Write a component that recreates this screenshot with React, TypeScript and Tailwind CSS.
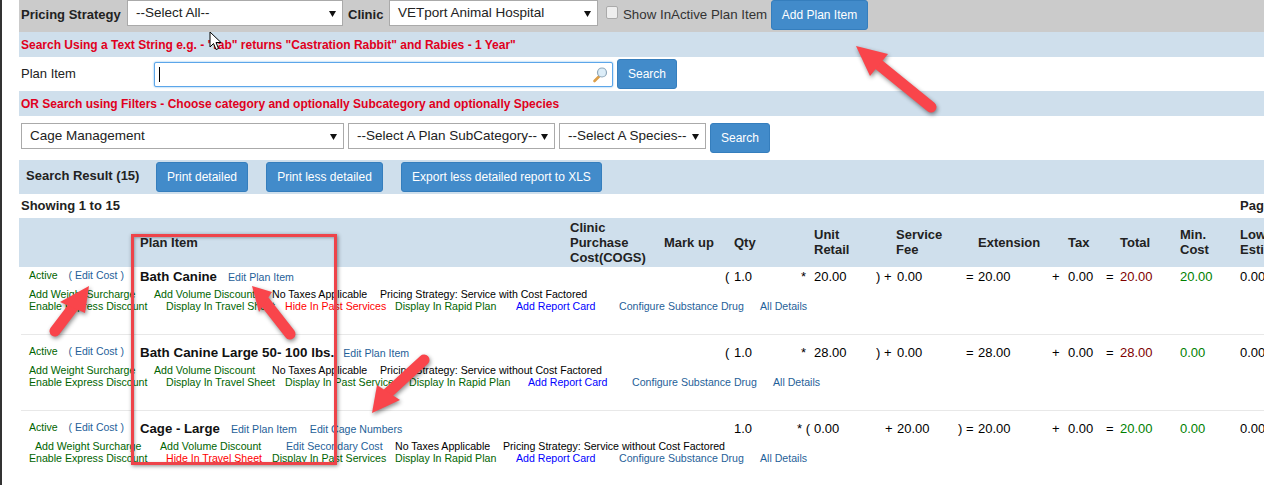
import React from "react";

const G = "text-[#006400]";
const B = "text-[#1f5f99]";
const K = "text-black";
const U = "text-[#0000ff]";
const R = "text-[#ff0000]";
const gridCols = "grid grid-cols-[121px_430px_94px_61px_72px_79px_82px_94px_54px_74px_60px_1fr]";

type Item = [string, string, string];

function Sel({ label, w, h = "h-[26px]" }: { label: string; w: string; h?: string }) {
  return (
    <div className={`relative shrink-0 ${w} ${h} border border-[#aaa] bg-white flex items-center pl-[8px] pt-[1px] text-[13.5px] text-[#222] whitespace-nowrap`}>
      {label}
      <svg className="absolute right-[6px] top-[9px]" width="7" height="7" viewBox="0 0 7 7"><path d="M0 1h7L3.5 7z" fill="#111" /></svg>
    </div>
  );
}

function Btn({ label, w, h = "h-[30px]" }: { label: string; w: string; h?: string }) {
  return (
    <button className={`shrink-0 ${w} ${h} rounded-[3px] bg-[#428bca] border border-[#357ebd] text-white text-[12px] flex items-center justify-center`}>
      {label}
    </button>
  );
}

function Line({ items, cls }: { items: Item[]; cls: string }) {
  return (
    <div className={`flex h-[12px] items-center pl-[10px] text-[10.6px] leading-[12px] whitespace-nowrap ${cls}`}>
      {items.map(([t, w, c]) => (
        <span key={t} className={`shrink-0 ${w} ${c}`}>{t}</span>
      ))}
    </div>
  );
}

function Cell({ p, pw, v, vc = "text-black" }: { p: string; pw: string; v: string; vc?: string }) {
  return (
    <div className="flex whitespace-nowrap">
      <span className={`shrink-0 ${pw} text-left`}>{p}</span>
      <span className={vc}>{v}</span>
    </div>
  );
}

function Row({ top, name, nameSize, links, vals, l1, l2, l1cls, border, h }: {
  top: string; name: string; nameSize: string; links: React.ReactNode; vals: React.ReactNode; l1: Item[]; l2: Item[]; l1cls: string; border: boolean; h: string;
}) {
  return (
    <div className={`${h} ${top} ${border ? "border-t border-[#e8e8e8] ml-[2px]" : ""}`}>
      <div className={`${gridCols} ${border ? "-ml-[2px]" : ""} text-[13px] leading-[16px] text-black h-[19px] items-center`}>
        <div className="pl-[10px] pb-[3px] text-[10.5px] text-[#006400] whitespace-nowrap">
          Active <span className="ml-[8px] text-[#1f5f99]">( Edit Cost )</span>
        </div>
        <div className="flex items-baseline whitespace-nowrap">
          <span className={`${nameSize} font-bold text-[#111]`}>{name}</span>
          {links}
        </div>
        <div />
        <div />
        {vals}
      </div>
      <div className={`mt-[2px] ${border ? "-ml-[2px]" : ""}`}>
        <Line items={l1} cls={l1cls} />
        <Line items={l2} cls="" />
      </div>
    </div>
  );
}

function Arrow({ tail, neck, head }: { tail: [number, number]; neck: [number, number]; head: string }) {
  return (
    <g>
      <line x1={tail[0]} y1={tail[1]} x2={neck[0]} y2={neck[1]} stroke="#f9454b" strokeWidth="11" strokeLinecap="round" />
      <polygon points={head} fill="#f9454b" />
    </g>
  );
}

export default function App() {
  const hd = "text-[13px] leading-[15px] font-bold text-[#222]";
  return (
    <div className="relative h-[485px] w-[1264px] overflow-hidden bg-white flex font-['Liberation_Sans',Arial,sans-serif]">
      <div className="w-[2px] bg-[#333] shrink-0" />
      <div className="flex-1 ml-[17px] min-w-0 flex flex-col">
        <div className="h-[32px] shrink-0 bg-[#cbcbcb] flex items-start pl-[2px] text-[#222]">
          <span className="text-[13px] font-bold mt-[5px] w-[106px] shrink-0 whitespace-nowrap">Pricing Strategy</span>
          <Sel label="--Select All--" w="w-[216px]" />
          <span className="text-[13px] font-bold mt-[5px] ml-[5px] w-[41px] shrink-0">Clinic</span>
          <Sel label="VETport Animal Hospital" w="w-[209px]" />
          <span className="ml-[8px] mt-[6px] w-[12px] h-[13px] rounded-[2px] border border-[#aaa] bg-[#eee] shrink-0" />
          <span className="ml-[5px] mt-[5px] w-[148px] shrink-0 text-[13.3px] whitespace-nowrap text-[#333]">Show InActive Plan Item</span>
          <Btn label="Add Plan Item" w="w-[97px]" />
        </div>
        <div className="h-[25px] shrink-0 bg-[#cfdfec] pl-[2px] flex items-center text-[12px] font-bold text-[#e00020] whitespace-pre">
          Search Using a Text String e.g. - "rab" returns "Castration Rabbit" and Rabies - 1 Year"
        </div>
        <div className="h-[34px] shrink-0 flex items-center pl-[2px]">
          <span className="w-[133px] shrink-0 text-[13px] text-[#222]">Plan Item</span>
          <div className="relative w-[459px] h-[25px] shrink-0 border border-[#5ca6ea] rounded-[2px] shadow-[0_0_2px_#66afe9] bg-white flex items-center pl-[4px]">
            <span className="w-[1px] h-[15px] bg-black" />
            <svg className="absolute right-[4px] top-[3px]" width="16" height="17" viewBox="0 0 16 17">
              <path d="M2.5 15l5-5" stroke="#dc9f4a" strokeWidth="2.6" strokeLinecap="round" />
              <circle cx="10" cy="6.5" r="4.5" fill="#dcedf8" stroke="#8fa8bb" strokeWidth="1.2" />
            </svg>
          </div>
          <div className="ml-[4px]"><Btn label="Search" w="w-[60px]" /></div>
        </div>
        <div className="h-[25px] shrink-0 bg-[#cfdfec] pl-[2px] flex items-center text-[12px] font-bold text-[#e00020] whitespace-pre">
          OR Search using Filters - Choose category and optionally Subcategory and optionally Species
        </div>
        <div className="h-[44px] shrink-0 flex items-start pt-[7px] pl-[2px] gap-[4px]">
          <Sel label="Cage Management" w="w-[323px]" />
          <Sel label="--Select A Plan SubCategory--" w="w-[207px]" />
          <Sel label="--Select A Species--" w="w-[147px]" />
          <Btn label="Search" w="w-[60px]" />
        </div>
        <div className="h-[34px] shrink-0 bg-[#cfdfec] flex items-start pl-[7px]">
          <span className="w-[130px] shrink-0 mt-[6px] text-[13px] font-bold text-[#222]">Search Result (15)</span>
          <div className="mt-[2px] flex gap-[18px]">
            <Btn label="Print detailed" w="w-[92px]" />
            <Btn label="Print less detailed" w="w-[117px]" />
            <Btn label="Export less detailed report to XLS" w="w-[201px]" />
          </div>
        </div>
        <div className="h-[24px] shrink-0 flex items-center justify-between pl-[2px] text-[13px] text-[#222]">
          <span className="font-bold">Showing 1 to 15</span>
          <span className="w-[24px] overflow-hidden font-bold whitespace-nowrap">Page</span>
        </div>
        <div className={`${gridCols} h-[49px] shrink-0 bg-[#cfdfec] items-center ${hd}`}>
          <div />
          <div>Plan Item</div>
          <div>Clinic<br />Purchase<br />Cost(COGS)</div>
          <div>Mark up</div>
          <div className="pl-[9px]">Qty</div>
          <div className="pl-[17px] pb-[2px]">Unit<br />Retail</div>
          <div className="pl-[20px] pb-[2px]">Service<br />Fee</div>
          <div className="pl-[20px]">Extension</div>
          <div className="pl-[16px]">Tax</div>
          <div className="pl-[14px]">Total</div>
          <div className="pb-[2px]">Min.<br />Cost</div>
          <div className="whitespace-nowrap pb-[2px]">Low<br />Esti</div>
        </div>
        <Row
          h="h-[67px]" top="pt-[0px]" border={false} l1cls=""
          name="Bath Canine" nameSize="text-[13.2px]"
          links={<span className="ml-[11px] text-[10.6px] text-[#1f5f99]">Edit Plan Item</span>}
          vals={<>
            <Cell p="(" pw="w-[9px]" v="1.0" />
            <Cell p="*" pw="w-[17px] pl-[4px]" v="20.00" />
            <Cell p=") +" pw="w-[21px]" v="0.00" />
            <Cell p="=" pw="w-[20px] pl-[8px]" v="20.00" />
            <Cell p="+" pw="w-[16px]" v="0.00" />
            <Cell p="=" pw="w-[14px]" v="20.00" vc="text-[#800000]" />
            <div className="text-[#008000]">20.00</div>
            <div>0.00</div>
          </>}
          l1={[
            ["Add Weight Surcharge", "w-[125px]", G],
            ["Add Volume Discount", "w-[118px]", G],
            ["No Taxes Applicable", "w-[108px]", K],
            ["Pricing Strategy: Service with Cost Factored", "w-[300px]", K],
          ]}
          l2={[
            ["Enable Express Discount", "w-[137px]", G],
            ["Display In Travel Sheet", "w-[119px]", G],
            ["Hide In Past Services", "w-[110px]", R],
            ["Display In Rapid Plan", "w-[121px]", G],
            ["Add Report Card", "w-[103px]", U],
            ["Configure Substance Drug", "w-[141px]", B],
            ["All Details", "w-[60px]", B],
          ]}
        />
        <Row
          h="h-[76px]" top="pt-[8px]" border l1cls=""
          name="Bath Canine Large 50- 100 lbs." nameSize="text-[13.4px]"
          links={<span className="ml-[9px] text-[10.6px] text-[#1f5f99]">Edit Plan Item</span>}
          vals={<>
            <Cell p="(" pw="w-[9px]" v="1.0" />
            <Cell p="*" pw="w-[17px] pl-[4px]" v="28.00" />
            <Cell p=") +" pw="w-[21px]" v="0.00" />
            <Cell p="=" pw="w-[20px] pl-[8px]" v="28.00" />
            <Cell p="+" pw="w-[16px]" v="0.00" />
            <Cell p="=" pw="w-[14px]" v="28.00" vc="text-[#800000]" />
            <div className="text-[#008000]">0.00</div>
            <div>0.00</div>
          </>}
          l1={[
            ["Add Weight Surcharge", "w-[125px]", G],
            ["Add Volume Discount", "w-[118px]", G],
            ["No Taxes Applicable", "w-[108px]", K],
            ["Pricing Strategy: Service without Cost Factored", "w-[300px]", K],
          ]}
          l2={[
            ["Enable Express Discount", "w-[137px]", G],
            ["Display In Travel Sheet", "w-[119px]", G],
            ["Display In Past Services", "w-[124px]", G],
            ["Display In Rapid Plan", "w-[119px]", G],
            ["Add Report Card", "w-[104px]", U],
            ["Configure Substance Drug", "w-[141px]", B],
            ["All Details", "w-[60px]", B],
          ]}
        />
        <Row
          h="h-[75px]" top="pt-[8px]" border l1cls="pl-[16px]"
          name="Cage - Large" nameSize="text-[13.2px]"
          links={<>
            <span className="ml-[11px] text-[10.6px] text-[#1f5f99]">Edit Plan Item</span>
            <span className="ml-[13px] text-[10.6px] text-[#1f5f99]">Edit Cage Numbers</span>
          </>}
          vals={<>
            <Cell p="" pw="w-[9px]" v="1.0" />
            <Cell p="* (" pw="w-[17px]" v="0.00" />
            <Cell p="+" pw="w-[21px] pl-[9px]" v="20.00" />
            <Cell p=") =" pw="w-[20px]" v="20.00" />
            <Cell p="+" pw="w-[16px]" v="0.00" />
            <Cell p="=" pw="w-[14px]" v="20.00" vc="text-[#008000]" />
            <div className="text-[#008000]">0.00</div>
            <div>0.00</div>
          </>}
          l1={[
            ["Add Weight Surcharge", "w-[125px]", G],
            ["Add Volume Discount", "w-[126px]", G],
            ["Edit Secondary Cost", "w-[109px]", B],
            ["No Taxes Applicable", "w-[108px]", K],
            ["Pricing Strategy: Service without Cost Factored", "w-[300px]", K],
          ]}
          l2={[
            ["Enable Express Discount", "w-[137px]", G],
            ["Hide In Travel Sheet", "w-[106px]", R],
            ["Display In Past Services", "w-[123px]", G],
            ["Display In Rapid Plan", "w-[121px]", G],
            ["Add Report Card", "w-[103px]", U],
            ["Configure Substance Drug", "w-[141px]", B],
            ["All Details", "w-[60px]", B],
          ]}
        />
      </div>

      {/* annotations lying over the page */}
      <div className="absolute left-[131px] top-[234px] w-[206px] h-[231px] border-[3px] border-[#ee4349] shadow-[1px_1px_4px_rgba(0,0,0,0.45),inset_1px_1px_3px_rgba(0,0,0,0.3)]" />
      <svg className="absolute left-0 top-0 drop-shadow-[1px_2px_2px_rgba(0,0,0,0.45)]" width="1264" height="485" viewBox="0 0 1264 485">
        <Arrow tail={[931, 107]} neck={[878, 64]} head="856,46 888,54 870,76" />
        <Arrow tail={[55, 331]} neck={[74, 306]} head="89,286 60,302 85,313" />
        <Arrow tail={[290, 334]} neck={[265, 302]} head="252,286 272,292 259,312" />
        <Arrow tail={[424, 360]} neck={[388, 393]} head="372,413 377,385 400,400" />
      </svg>
      <svg className="absolute left-[209px] top-[31px]" width="13" height="20" viewBox="0 0 13 20">
        <path d="M1 1v15l3.5-3.5 2.5 6 2.5-1-2.5-6H12z" fill="#fff" stroke="#000" strokeWidth="1" />
      </svg>
    </div>
  );
}
